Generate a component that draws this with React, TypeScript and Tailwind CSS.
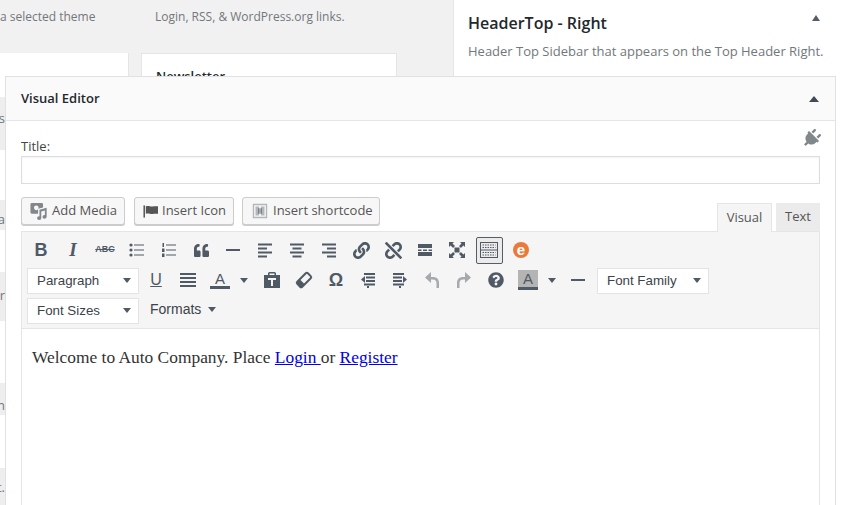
import type { ReactNode } from "react";
import { FaLink, FaPlug, FaQuestionCircle, FaQuoteLeft, FaUnlink } from "react-icons/fa";

function Ico({ children }: { children: ReactNode }) {
    return (
        <svg viewBox="0 0 20 20" className="w-5 h-5" fill="currentColor">
            {children}
        </svg>
    );
}

function Lines({ rows }: { rows: [number, number, number][] }) {
    return (
        <Ico>
            {rows.map(([x, y, w], i) => (
                <rect key={i} x={x} y={y} width={w} height={2} />
            ))}
        </Ico>
    );
}

function Btn({ children, className = "" }: { children: ReactNode; className?: string }) {
    return <div className={`w-8 h-[30px] shrink-0 flex items-center justify-center text-[#4f5a65] ${className}`}>{children}</div>;
}

function Caret({ className = "" }: { className?: string }) {
    return <span className={`w-0 h-0 border-x-[4px] border-x-transparent border-t-[5px] border-t-[#4f5a65] ${className}`} />;
}

function Select({ label, className = "" }: { label: string; className?: string }) {
    return (
        <div
            className={`w-[112px] h-[26px] shrink-0 mt-[1px] bg-white border border-[#e3e3e3] flex items-center justify-between pl-[9px] pr-[7px] text-[13.33px] text-[#3c434a] font-['Liberation_Sans',sans-serif] ${className}`}
        >
            {label}
            <Caret />
        </div>
    );
}

function MediaButton({ icon, label, className = "" }: { icon: ReactNode; label: string; className?: string }) {
    return (
        <div
            className={`h-[28px] flex items-center gap-[4px] pl-[8px] bg-[#f7f7f7] border border-[#cccccc] rounded-[3px] shadow-[0_1px_0_#cccccc] text-[13px] text-[#555555] ${className}`}
        >
            {icon}
            {label}
        </div>
    );
}

const sideRows = [
    { h: 44, gray: false, t: "", top: 0 },
    { h: 53, gray: true, t: "s", top: 11 },
    { h: 50, gray: false, t: "", top: 0 },
    { h: 30, gray: true, t: "a", top: 9 },
    { h: 42, gray: false, t: "", top: 0 },
    { h: 49, gray: true, t: "er", top: 13 },
    { h: 62, gray: false, t: "", top: 0 },
    { h: 32, gray: true, t: "n", top: 12 },
    { h: 53, gray: false, t: "", top: 0 },
    { h: 37, gray: true, t: "t.", top: 9 },
];

export default function App() {
    return (
        <div className="relative w-[843px] h-[505px] overflow-hidden bg-[#f1f1f1] font-['Open_Sans',sans-serif]">
            {/* page behind the modal */}
            <div className="flex h-full">
                <div className="w-[453px] shrink-0 flex">
                    <div className="w-[129px] shrink-0 flex flex-col">
                        <div className="h-[53px] pt-[7px] text-[12px] leading-5 text-[#72777c] whitespace-nowrap">a selected theme</div>
                        <div className="w-full flex-1 bg-white border-r border-[#e5e5e5]">
                            {sideRows.map((r, i) => (
                                <div
                                    key={i}
                                    style={{ height: r.h, paddingTop: r.top }}
                                    className={`w-[5px] overflow-hidden flex items-start justify-end text-[13px] leading-5 text-[#72777c] ${r.gray ? "bg-[#eeeeee]" : "bg-white"}`}
                                >
                                    {r.t}
                                </div>
                            ))}
                        </div>
                    </div>
                    <div className="ml-[12px] w-[256px] shrink-0 flex flex-col">
                        <div className="h-[53px] pt-[7px] pl-[14px] text-[12px] leading-5 text-[#72777c] whitespace-nowrap">
                            Login, RSS, &amp; WordPress.org links.
                        </div>
                        <div className="flex-1 bg-white border border-[#e5e5e5] pl-[14px] pt-[12px] text-[13px] leading-5 font-semibold text-[#23282d]">
                            Newsletter
                        </div>
                    </div>
                </div>
                <div className="flex-1 bg-white border-l border-[#e5e5e5] pl-[14px] pr-[19px] pt-[12px]">
                    <div className="flex items-start justify-between">
                        <div className="text-[16px] leading-[22px] font-semibold text-[#23282d]">HeaderTop - Right</div>
                        <span className="w-0 h-0 border-x-[4px] border-x-transparent border-b-[6px] border-b-[#555d66] mt-[3px] mr-[4px]" />
                    </div>
                    <div className="mt-[7px] text-[13px] leading-5 text-[#72777c] whitespace-nowrap">Header Top Sidebar that appears on the Top Header Right.</div>
                </div>
            </div>

            {/* modal */}
            <div className="absolute left-[5px] top-[76px] w-[831px] h-[429px] bg-white border-x border-t border-[#e1e1e1] flex flex-col">
                <div className="h-[44px] shrink-0 bg-[#fafafa] border-b border-[#e5e5e5] pl-[15px] pr-[16px] flex items-center justify-between">
                    <div className="text-[13px] font-semibold text-[#23282d]">Visual Editor</div>
                    <span className="w-0 h-0 border-x-[5px] border-x-transparent border-b-[6px] border-b-[#3f4a55]" />
                </div>

                <div className="flex-1 flex flex-col pl-[15px] pr-[15px] pt-[9px]">
                    <div className="h-[26px] flex justify-between">
                        <span className="self-end text-[13px] leading-5 text-[#444444]">Title:</span>
                        <FaPlug className="w-[19px] h-[19px] rotate-45 text-[#82878c] -mr-[1px] -mt-[1px]" />
                    </div>
                    <div className="h-[28px] shrink-0 border border-[#dddddd] bg-white shadow-[inset_0_1px_2px_rgba(0,0,0,0.05)]" />

                    <div className="mt-[13px] h-[34px] shrink-0 flex justify-between items-start">
                        <div className="flex">
                            <MediaButton
                                className="w-[104px]"
                                label="Add Media"
                                icon={
                                    <svg viewBox="0 0 20 20" className="w-[18px] h-[18px] text-[#82878c]" fill="currentColor">
                                        <path d="M2 1h11a1.500 1.500 0 0 1 1.500 1.500V6L9 7.500V13H2a1.500 1.500 0 0 1-1.500-1.500v-9A1.500 1.500 0 0 1 2 1z" />
                                        <circle cx="7" cy="6.500" r="2.600" fill="#f7f7f7" />
                                        <path d="M10.500 8.500l8-2v10a2.300 2 0 1 1-2-2V9.500l-4 1v7.500a2.300 2 0 1 1-2-2z" />
                                    </svg>
                                }
                            />
                            <MediaButton
                                className="w-[100px] ml-[9px]"
                                label="Insert Icon"
                                icon={
                                    <svg viewBox="2 2 16 16" className="w-[15px] h-[15px] text-[#555555]" fill="currentColor">
                                        <rect x="2.500" y="3.500" width="1.600" height="13" />
                                        <path d="M5 4.500c3-1.400 5 1 8.500 0H18v8h-4.500c-3.500 1-5.500-1.400-8.500 0z" />
                                    </svg>
                                }
                            />
                            <MediaButton
                                className="w-[138px] ml-[8px]"
                                label="Insert shortcode"
                                icon={
                                    <svg viewBox="0 0 20 20" className="w-[18px] h-[18px] text-[#b4b7ba]" fill="currentColor">
                                        <path d="M2 2h16v16H2zM3.500 3.500v13h13v-13z" />
                                        <path d="M5 5h4v10H5zM11 5h4v10h-4z" />
                                        <path d="M8 7h1.500v6H8zM10.500 7H12v6h-1.500z" fill="#6d7378" />
                                    </svg>
                                }
                            />
                        </div>
                        <div className="flex items-start mt-[6px]">
                            <div className="h-[29px] w-[55px] z-10 bg-[#f5f5f5] border-x border-t border-[#e5e5e5] flex items-center justify-center pb-[1px] text-[13px] text-[#555555]">Visual</div>
                            <div className="ml-[4px] h-[28px] w-[44px] bg-[#ebebeb] flex items-center justify-center text-[13px] text-[#555555]">Text</div>
                        </div>
                    </div>

                    {/* editor */}
                    <div className="flex-1 border border-[#e5e5e5] border-b-0 flex flex-col">
                        <div className="h-[97px] shrink-0 bg-[#f5f5f5] border-b border-[#e5e5e5] pt-[3px] pl-[3px]">
                            <div className="h-[30px] flex">
                                <Btn><span className="text-[18px] font-bold font-['Liberation_Sans',sans-serif]">B</span></Btn>
                                <Btn><span className="text-[19px] font-bold italic font-['Liberation_Serif',serif]">I</span></Btn>
                                <Btn><span className="text-[9px] font-bold line-through font-['Liberation_Sans',sans-serif]">ABC</span></Btn>
                                <Btn>
                                    <Ico>
                                        <circle cx="4" cy="5" r="1.600" /><circle cx="4" cy="10" r="1.600" /><circle cx="4" cy="15" r="1.600" />
                                        <rect x="7" y="4.500" width="10" height="1" /><rect x="7" y="9.500" width="10" height="1" /><rect x="7" y="14.500" width="10" height="1" />
                                    </Ico>
                                </Btn>
                                <Btn>
                                    <Ico>
                                        <rect x="3.500" y="3" width="1.500" height="4" /><rect x="3" y="8.500" width="2.500" height="3.500" /><rect x="3" y="13.500" width="2.500" height="3.500" />
                                        <rect x="7" y="4.500" width="10" height="1" /><rect x="7" y="9.500" width="10" height="1" /><rect x="7" y="14.500" width="10" height="1" />
                                    </Ico>
                                </Btn>
                                <Btn><FaQuoteLeft className="w-[15px] h-[15px]" /></Btn>
                                <Btn><Lines rows={[[3, 9, 14]]} /></Btn>
                                <Btn><Lines rows={[[3, 3.500, 14], [3, 7.500, 9], [3, 11.500, 14], [3, 15.500, 9]]} /></Btn>
                                <Btn><Lines rows={[[3, 3.500, 14], [5.500, 7.500, 9], [3, 11.500, 14], [5.500, 15.500, 9]]} /></Btn>
                                <Btn><Lines rows={[[3, 3.500, 14], [8, 7.500, 9], [3, 11.500, 14], [8, 15.500, 9]]} /></Btn>
                                <Btn><FaLink className="w-[17px] h-[17px]" /></Btn>
                                <Btn><FaUnlink className="w-[17px] h-[17px]" /></Btn>
                                <Btn>
                                    <Ico>
                                        <rect x="3" y="4" width="14" height="4" />
                                        <rect x="3" y="9.500" width="3.500" height="1.500" /><rect x="8" y="9.500" width="4" height="1.500" /><rect x="13.500" y="9.500" width="3.500" height="1.500" />
                                        <rect x="3" y="12" width="14" height="4" />
                                    </Ico>
                                </Btn>
                                <Btn>
                                    <Ico>
                                        <rect x="7.500" y="7.500" width="5" height="5" />
                                        <path d="M2 2h5L5.500 3.600l2.500 2.500-1.900 1.900-2.500-2.500L2 7zM18 2v5l-1.600-1.500-2.500 2.500-1.900-1.900 2.500-2.500L13 2zM2 18v-5l1.600 1.500 2.500-2.500 1.900 1.900-2.500 2.500L7 18zM18 18h-5l1.500-1.600-2.500-2.500 1.900-1.900 2.500 2.500L18 13z" />
                                    </Ico>
                                </Btn>
                                <div className="w-8 h-[30px] shrink-0 flex items-center justify-center">
                                    <div className="w-[27px] h-[27px] bg-[#ebebeb] border border-[#555d66] rounded-[2px] flex items-center justify-center text-[#4f5a65]">
                                        <Ico>
                                            <path d="M1 2h18v16H1zM2 3v6.500h16V3zM2 10.500V17h16v-6.500z" fillRule="evenodd" />
                                            <g fill="none" stroke="currentColor" strokeDasharray="1.500 1">
                                                <path d="M3.500 5h13M3.500 7.500h13M3.500 12.500h13M3.500 15h13" />
                                            </g>
                                        </Ico>
                                    </div>
                                </div>
                                <Btn>
                                    <div className="w-4 h-4 rounded-full bg-[#ea7a3c] flex items-center justify-center text-white text-[15px] leading-none font-bold font-['Liberation_Sans',sans-serif] pb-[2px]">e</div>
                                </Btn>
                            </div>

                            <div className="h-[30px] flex items-center pl-[2px]">
                                <Select label="Paragraph" />
                                <Btn className="ml-[1px]"><span className="text-[16px] underline font-['Liberation_Sans',sans-serif]">U</span></Btn>
                                <Btn><Lines rows={[[2, 3, 16], [2, 7, 16], [2, 11, 16], [2, 15, 16]]} /></Btn>
                                <Btn>
                                    <div className="flex flex-col items-center">
                                        <span className="text-[15px] leading-[15px] font-['Liberation_Sans',sans-serif]">A</span>
                                        <span className="w-[20px] h-[3px] bg-[#4f5a65]" />
                                    </div>
                                </Btn>
                                <div className="w-4 flex justify-center"><Caret /></div>
                                <Btn className="ml-[4px]">
                                    <Ico>
                                        <path d="M2 5h4V3.500A1.500 1.500 0 0 1 7.500 2h5A1.500 1.500 0 0 1 14 3.500V5h4v13H2zM7.500 3.500V5h5V3.500zM6 8v2h3v6h2v-6h3V8z" fillRule="evenodd" />
                                    </Ico>
                                </Btn>
                                <Btn>
                                    <svg viewBox="0 0 20 20" className="w-5 h-5">
                                        <g transform="rotate(-45 10 10)">
                                            <rect x="2.500" y="6.500" width="15" height="7" rx="1.500" fill="none" stroke="currentColor" strokeWidth="2" />
                                            <rect x="2.500" y="6.500" width="5" height="7" rx="1" fill="currentColor" />
                                        </g>
                                    </svg>
                                </Btn>
                                <Btn><span className="text-[18px] font-bold font-['Liberation_Sans',sans-serif]">Ω</span></Btn>
                                <Btn>
                                    <Ico>
                                        <rect x="6" y="3" width="11" height="2" /><rect x="8" y="6.500" width="9" height="2" /><rect x="8" y="10" width="9" height="2" /><rect x="6" y="13.500" width="11" height="2" /><rect x="9" y="16" width="2" height="2" />
                                        <path d="M7 6l-4 3.500L7 13z" />
                                    </Ico>
                                </Btn>
                                <Btn>
                                    <Ico>
                                        <rect x="3" y="3" width="11" height="2" /><rect x="3" y="6.500" width="9" height="2" /><rect x="3" y="10" width="9" height="2" /><rect x="3" y="13.500" width="11" height="2" /><rect x="9" y="16" width="2" height="2" />
                                        <path d="M13 6l4 3.500-4 3.500z" />
                                    </Ico>
                                </Btn>
                                <Btn className="text-[#a7aaad]">
                                    <Ico><path d="M9 2L3 7.500 9 13V9.500h1.500c3 0 4 1.500 4 4V18H17v-5c0-4-2.500-6-6-6H9z" /></Ico>
                                </Btn>
                                <Btn className="text-[#a7aaad]">
                                    <Ico><path d="M11 2l6 5.500L11 13V9.500H9.500c-3 0-4 1.500-4 4V18H3v-5c0-4 2.500-6 6-6h2z" /></Ico>
                                </Btn>
                                <Btn><FaQuestionCircle className="w-4 h-4" /></Btn>
                                <Btn>
                                    <div className="w-5 h-5 bg-[#b4b4b4] flex flex-col items-center">
                                        <span className="text-[15px] leading-[17px] font-['Liberation_Sans',sans-serif]">A</span>
                                        <span className="w-full h-[3px] bg-[#4f5a65]" />
                                    </div>
                                </Btn>
                                <div className="w-4 flex justify-center"><Caret /></div>
                                <Btn className="ml-[2px]"><Lines rows={[[3, 9, 14]]} /></Btn>
                                <Select label="Font Family" className="ml-[3px]" />
                            </div>

                            <div className="h-[30px] flex items-center pl-[2px]">
                                <Select label="Font Sizes" />
                                <div className="ml-[11px] mb-[1px] flex items-center gap-[7px] text-[14px] text-[#3c434a] font-['Liberation_Sans',sans-serif]">
                                    Formats
                                    <Caret />
                                </div>
                            </div>
                        </div>
                        <div className="flex-1 bg-white pl-[10px] pt-[16px] text-[17.4px] leading-[24px] text-[#333333] font-['Liberation_Serif',serif]">
                            Welcome to Auto Company. Place <a href="#" className="text-[#0000ee] underline">Login </a>or{" "}
                            <a href="#" className="text-[#0000ee] underline">Register</a>
                        </div>
                    </div>
                </div>
            </div>
        </div>
    );
}
